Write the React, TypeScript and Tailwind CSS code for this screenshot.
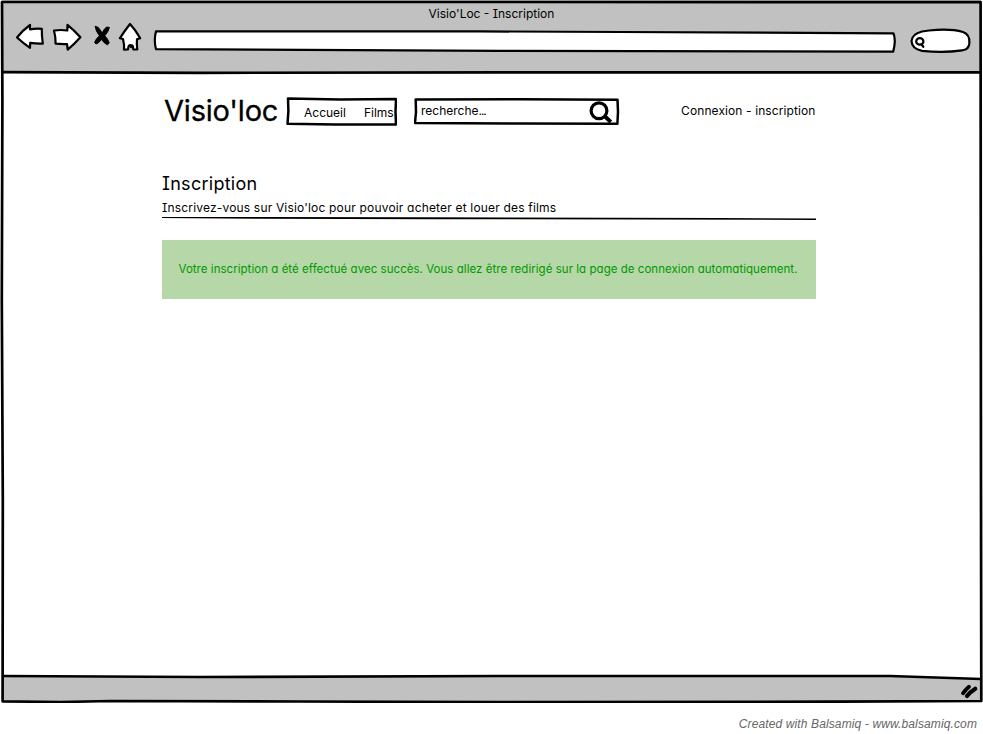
import React from "react";

const hand =
  "font-['Inter','Liberation_Sans',sans-serif] [font-feature-settings:'cv11','cv08'] whitespace-nowrap text-black";

function Icon({ box, className, children }: { box: string; className: string; children: React.ReactNode }) {
  return (
    <svg
      viewBox={box}
      className={`block shrink-0 overflow-visible ${className}`}
      fill="white"
      stroke="black"
      strokeWidth="2.2"
      strokeLinejoin="round"
      strokeLinecap="round"
      aria-hidden="true"
    >
      {children}
    </svg>
  );
}

function BrowserBar() {
  return (
    <header className="mx-[2px] h-[73px] bg-[#c1c1c1]">
      <h1 className={`${hand} pt-[7px] text-center text-[12px] leading-[14px]`}>Visio'Loc - Inscription</h1>
      <div className="flex h-[32px] items-start pl-[13px] pt-[1px]">
        <Icon box="15 22 30 30" className="h-[30px] w-[30px]">
          <path d="M17 37.5 Q23 30 30 25 L30 29.3 Q36 28.3 41.8 28.9 Q41.7 36 42.8 43.6 Q36 43.8 30.2 42.9 L30 47.8 Q23 43 17 37.5Z" />
        </Icon>
        <Icon box="52 22 30 30" className="ml-[7px] h-[30px] w-[30px]">
          <path d="M54 30.5 Q61 29.5 67.3 30.5 L67.5 24.8 Q74 30 80.4 37.3 Q74 44.5 67.7 49.6 L67 44 Q61 44.2 55.6 43.6 Q55.7 37 54 30.5Z" />
        </Icon>
        <Icon box="92 22 20 30" className="ml-[10px] h-[30px] w-[20px]">
          <path
            fill="black"
            strokeWidth="1"
            d="M95.3 26.6 L98 27.2 Q100.5 30 102.2 33 Q104 29 106.5 27 L109.4 27.4 Q108.8 31 104.8 35.8 Q108 39 109.3 43 L107.4 44.8 Q104 43.3 101.5 39.5 Q98.5 43.5 96 44 L94.5 42.5 Q95.8 39 99.4 35.8 Q95.5 30.8 95.3 26.6Z"
          />
        </Icon>
        <Icon box="118 22 24 30" className="ml-[6px] h-[30px] w-[24px]">
          <path d="M130 24 Q136 30.5 140.2 38.2 L137 39.3 Q136.5 44 137.3 49.5 L133.2 49.3 Q133.3 45.5 131.6 45.4 L131 47 L130.4 45.2 Q128.5 45 128 49.3 L124 49.6 Q124.5 45 123 39 L119.8 38.3 Q124.5 31 130 24Z" />
        </Icon>
        <Icon box="152 22 746 32" className="ml-[10px] h-[32px] w-[746px]">
          <path d="M156 31.4 L480 31.4 L620 32 L893.4 33.3 Q896.3 40 893.2 51.6 L500 50.8 L156 49.2 Q153.6 40 156 31.4Z" />
        </Icon>
        <Icon box="909 22 63 32" className="ml-[11px] h-[32px] w-[63px]">
          <path d="M929 30.5 Q950 28.2 963 32 Q970 34.5 969.4 43 Q969.3 49.5 962 50.4 Q943 53.2 922 50.8 Q912 49 911.5 41 Q912 34 922 31.5Z" />
          <ellipse cx="919.8" cy="41.4" rx="3.6" ry="3.2" />
          <path d="M921.5 44.5 L923.3 46.8" />
        </Icon>
      </div>
    </header>
  );
}

function SiteHeader() {
  return (
    <div className="flex h-[30px] items-start">
      <div className={`${hand} w-[124px] pl-[2px] text-[29px] leading-[28px] tracking-[-0.2px] [-webkit-text-stroke:0.3px_black]`}>
        Visio'loc
      </div>
      <nav className="relative h-[29px] w-[111px]">
        <svg viewBox="286 97 111 29" className="absolute inset-0 h-[29px] w-[111px]" fill="none" stroke="black" aria-hidden="true">
          <path strokeWidth="2.5" strokeLinejoin="round" d="M288 98.5 L340 99.5 L396 99 L395.5 112 L396 124.5 L335 124.5 L287.5 123.8 L288.4 111Z" />
        </svg>
        <div className={`${hand} flex gap-[18px] pl-[18px] pt-[9px] text-[12px] leading-[14px]`}>
          <span>Accueil</span>
          <span>Films</span>
        </div>
      </nav>
      <div className="relative ml-[17px] h-[29px] w-[206px]">
        <svg viewBox="414 97 206 29" className="absolute inset-0 h-[29px] w-[206px]" fill="none" stroke="black" aria-hidden="true">
          <path strokeWidth="2.5" strokeLinejoin="round" d="M415.7 99.5 L520 99.3 L617.5 99.8 L618 112 L617.4 123.7 L520 123.5 L415 123 L416 112Z" />
          <circle cx="599" cy="110.8" r="7.9" strokeWidth="3.2" />
          <path d="M604.5 116 L610.8 122" strokeWidth="3.8" />
        </svg>
        <div className={`${hand} pl-[7px] pt-[7px] text-[12px] leading-[14px]`}>
          recherche<span className="tracking-[-1.1px]">...</span>
        </div>
      </div>
      <div className={`${hand} ml-auto mr-[0.5px] pt-[7px] text-[12px] leading-[14px] tracking-[0.1px]`}>Connexion - inscription</div>
    </div>
  );
}

function Content() {
  return (
    <main className="h-[603px] pl-[162px] pt-[24px]">
      <div className="w-[654px]">
        <SiteHeader />
        <h2 className={`${hand} mt-[47px] text-[18px] leading-[20px] tracking-[0.27px]`}>Inscription</h2>
        <p className={`${hand} mt-[7px] text-[12px] leading-[14px] tracking-[0.18px]`}>
          Inscrivez-vous sur Visio'loc pour pouvoir acheter et louer des films
        </p>
        <svg viewBox="162 215 654 6" className="block h-[6px] w-[654px]" aria-hidden="true">
          <path d="M162 217 L260 217 L430 217.2 L720 218 L816 218.6 L816 220 L640 219.5 L430 219.2 L260 218.8 L162 218Z" />
        </svg>
        <div className="mt-[19px] h-[59px] w-[654px] bg-[#b6d7a8] pl-[16.5px] pt-[22px]">
          <p className={`${hand} text-[11.5px] leading-[14px] tracking-[0.037px] !text-[#009900]`}>
            Votre inscription a été effectué avec succès. Vous allez être redirigé sur la page de connexion automatiquement.
          </p>
        </div>
      </div>
    </main>
  );
}

export default function App() {
  return (
    <div className="h-[734px] w-[983px] overflow-hidden bg-white">
      <div className="relative h-[703px]">
        <BrowserBar />
        <Content />
        <footer className="mx-[2px] h-[25px] bg-[#c1c1c1]" />
        <svg
          viewBox="0 0 983 703"
          className="pointer-events-none absolute inset-0 h-[703px] w-[983px]"
          fill="none"
          stroke="black"
          strokeWidth="2.7"
          strokeLinejoin="round"
          aria-hidden="true"
        >
          <path d="M2 2 L500 2 L980.6 2.2 L980.8 300 L981 500 L981.3 701 L830 701.7 L500 702 L300 701.5 L110 701 L60 702 L2.6 701.3 L2.8 500 L1.8 300 L2.4 100Z" />
          <path d="M2 72.2 L200 72.8 L500 72.4 L981 72.4" />
          <path fill="white" stroke="none" d="M890 675 L980 675 L980 679 L890 676Z" />
          <path d="M2 676 L200 677 L500 676 L890 676 L981 679" />
          <path d="M963 693.3 Q965.3 690 969 686.8" strokeWidth="3.8" strokeLinecap="round" />
          <path d="M967 696 Q970.3 692 975.3 688.8" strokeWidth="4.2" strokeLinecap="round" />
        </svg>
      </div>
      <div className="pr-[6px] pt-[13px] text-right font-['Liberation_Sans',Arial,sans-serif] text-[12px] italic leading-[16px] tracking-[0.12px] text-[#666666]">
        Created with Balsamiq - www.balsamiq.com
      </div>
    </div>
  );
}
